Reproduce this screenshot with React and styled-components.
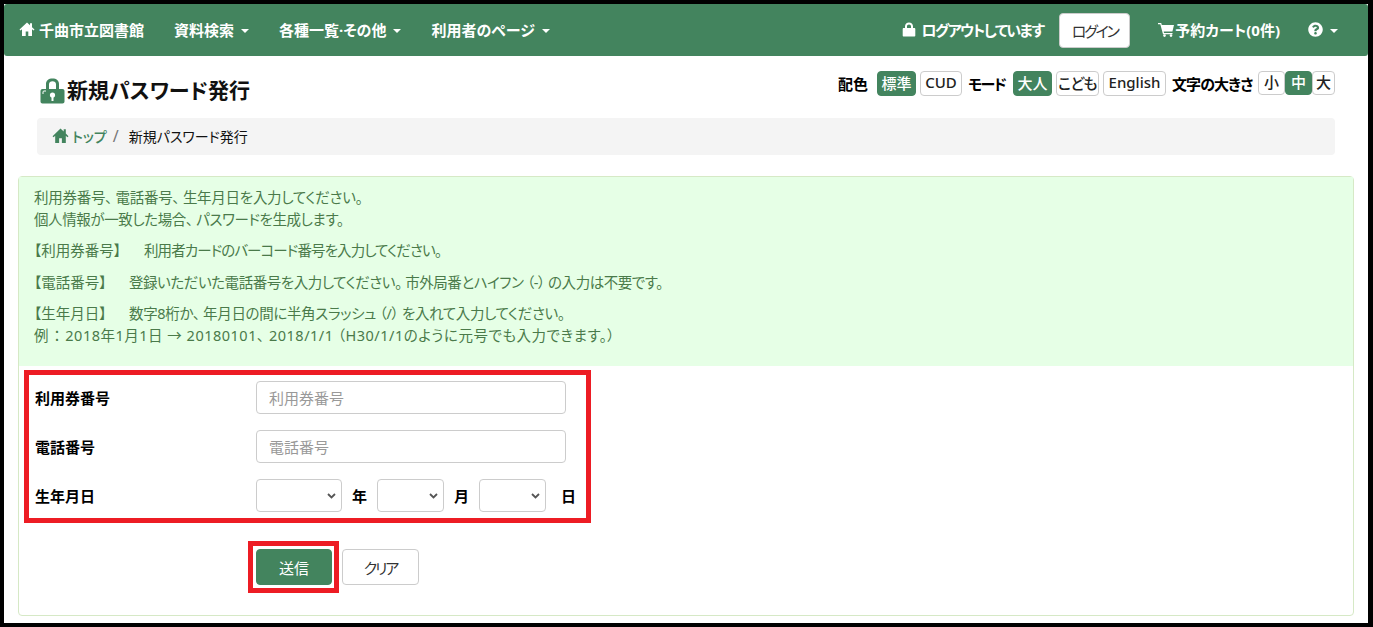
import React from "react";
import styled, { createGlobalStyle } from "styled-components";
import { FaQuestionCircle } from "react-icons/fa";

const Global = createGlobalStyle`
  html, body { margin: 0; padding: 0; background: #000; }
  body {
    font-family: "Noto Sans", "Noto Sans CJK JP", sans-serif;
    font-feature-settings: "palt";
    font-size: 15px;
    color: #111;
  }
`;
const green = "#43845e";
const chevron = "data:image/svg+xml,%3Csvg xmlns='http://www.w3.org/2000/svg' width='9' height='6' viewBox='0 0 9 6'%3E%3Cpath d='M1 1l3.500 3.500L8 1' fill='none' stroke='%23555' stroke-width='1.800'/%3E%3C/svg%3E";

const Frame = styled.div`
  width: 1373px; height: 627px; box-sizing: border-box; padding: 4px 5px 4px 4px; overflow: hidden;
`;
const Page = styled.div`
  background: #fff; height: 619px; display: flex; flex-direction: column;
`;
const Navbar = styled.nav`
  background: ${green}; height: 52px; box-sizing: border-box; flex: none; display: flex; align-items: center;
  padding: 0 30px 2px 15px; border-radius: 3px; color: #fff; font-weight: 700; font-size: 15px;
`;
const NavGroup = styled.div`
  display: flex; align-items: center; margin-left: auto;
`;
const Brand = styled.span`
  display: flex; align-items: center; gap: 4px; margin-right: 30px; white-space: nowrap;
`;
const NavItem = styled.span`
  display: flex; align-items: center; margin-right: 30px; white-space: nowrap;
`;
const NavText = styled.span`
  margin-left: ${p => p.$l || 0}px; letter-spacing: ${p => p.$ls || 0}px; white-space: nowrap;
`;
const Caret = styled.i`
  display: inline-block; width: 0; height: 0; margin-left: 7px; margin-top: 3px;
  border-top: 4px solid #fff; border-left: 4px solid transparent; border-right: 4px solid transparent;
`;
const HelpIcon = styled(FaQuestionCircle)`
  margin-left: 28px;
`;
const LoginButton = styled.button`
  width: 71px; height: 35px; background: #fff; border: 1px solid #ccc; border-radius: 4px; font: inherit;
  font-weight: 400; font-size: 15px; letter-spacing: -2.2px; color: #333; margin: 2px 28px 0 16px; padding: 0;
`;
const Header = styled.div`
  display: flex; justify-content: space-between; padding: 15px 33px 0 36px; height: 47px; flex: none;
`;
const Title = styled.h1`
  margin: 0; display: flex; align-items: flex-start; gap: 2px; padding-top: 4px;
  font-size: 21px; line-height: 30px; font-weight: 700; color: #111;
`;
const TitleIcon = styled.svg`
  margin-top: 3px;
`;
const Modes = styled.div`
  display: flex; align-items: flex-start; height: 25px;
`;
const ModeLabel = styled.span`
  font-weight: 700; font-size: 15px; line-height: 26px; width: ${p => p.$w}px; margin-right: ${p => p.$r}px;
  letter-spacing: ${p => p.$ls || 0}px; white-space: nowrap; color: #000;
`;
const ModeButton = styled.span`
  box-sizing: border-box; height: ${p => p.$h || 25}px; width: ${p => p.$w}px; margin-right: ${p => p.$r ?? 4}px;
  display: flex; align-items: center; justify-content: center; font-size: 15px; font-weight: 500; padding-bottom: 3px;
  white-space: nowrap; letter-spacing: ${p => p.$ls || 0}px;
  border: 1px solid ${p => (p.$on ? green : "#ccc")}; border-radius: 4px;
  background: ${p => (p.$on ? green : "#fff")}; color: ${p => (p.$on ? "#fff" : "#222")};
`;
const Crumb = styled.div`
  margin: 0 33px; height: 37px; flex: none; background: #f4f4f4; border-radius: 4px; box-sizing: border-box;
  display: flex; align-items: center; padding: 0 0 2px 15px; font-size: 14px;
`;
const CrumbLink = styled.span`
  display: flex; align-items: center; gap: 3px; color: ${green}; font-weight: 500;
`;
const CrumbSep = styled.span`
  color: #777; font-size: 16px; margin: 0 10px 0 6px;
`;
const Panel = styled.section`
  margin: 21px 14px 0; height: 440px; box-sizing: border-box; border: 1px solid #d6e9c6; border-radius: 4px; flex: none;
`;
const Notice = styled.div`
  background: #e6ffe6; height: 189px; box-sizing: border-box; padding: 9px 15px 0; color: #4a7a4a; font-size: 14.5px; line-height: 22px;
`;
const Para = styled.p`
  margin: 0 0 ${p => p.$b ?? 9.3}px;
`;
const Line = styled.span`
  display: block; letter-spacing: ${p => p.$ls || 0}px; white-space: pre;
`;
const Tag = styled.span`
  display: inline-block; width: ${p => p.$w}px; letter-spacing: 0;
`;
const RedForm = styled.div`
  box-sizing: border-box; width: 567px; height: 153px; margin: 4px 0 0 5px; border: 5px solid #ed1c24; padding: 6px 0 0 6px;
  display: flex; flex-direction: column; gap: 16px;
`;
const Row = styled.div`
  display: flex; align-items: center; height: 33px;
`;
const Label = styled.label`
  width: 221px; flex: none; font-weight: 700; font-size: 15px; color: #000;
`;
const TextInput = styled.input`
  width: 310px; height: 33px; box-sizing: border-box; border: 1px solid #ccc; border-radius: 4px; padding: 0 12px;
  font: inherit; font-size: 15px; &::placeholder { color: #999; }
`;
const Select = styled.select`
  flex: none; appearance: none; width: ${p => p.$w}px; height: 33px; box-sizing: border-box; border: 1px solid #ccc; border-radius: 4px;
  background: #fff url("${chevron}") no-repeat right 5px center;
`;
const Unit = styled.span`
  font-weight: 700; font-size: 15px; color: #000; width: ${p => p.$w}px; text-align: ${p => p.$a || "center"}; flex: none;
`;
const Actions = styled.div`
  display: flex; align-items: flex-start; margin: 18px 0 0 229px; gap: 3px;
`;
const RedWrap = styled.div`
  border: 5px solid #ed1c24; padding: 3px 2px 3px 3px; display: flex;
`;
const Btn = styled.button`
  width: ${p => p.$w}px; height: 36px; box-sizing: border-box; border-radius: 4px; font: inherit; font-size: 15px; padding: 0;
  letter-spacing: ${p => p.$ls || 0}px;
  border: 1px solid ${p => (p.$primary ? green : "#ccc")};
  background: ${p => (p.$primary ? green : "#fff")}; color: ${p => (p.$primary ? "#fff" : "#333")};
  margin-top: ${p => p.$top || 0}px;
`;

const Home = ({ s = 16, c = "#fff" }) => (
  <svg width={s} height={s} viewBox="0 0 16 16" fill={c}><path d="M8 1.500 0.500 8.600l1 1L3 8.200V15h3.700v-4.500h2.600V15H13V8.200l1.500 1.400 1-1-2.500-2.400V2.200h-2v2.100z" /></svg>
);
const Lock = () => (
  <svg width="14" height="15" viewBox="0 0 14 15" fill="#fff"><path d="M3 6V4.300C3 2 4.800.5 7 .5s4 1.500 4 3.800V6h1.200c.7 0 1.100.5 1.100 1.100v6.300c0 .7-.4 1.100-1.100 1.100H1.800c-.7 0-1.100-.4-1.100-1.100V7.100C.7 6.500 1.100 6 1.800 6zM5 6h4V4.300C9 3.200 8.100 2.500 7 2.500s-2 .7-2 1.800z" /></svg>
);
const Cart = () => (
  <svg width="17" height="15" viewBox="0 0 17 15" fill="#fff"><path d="M0 1h3.200l.6 2H16l-1.600 6.500H5.700l.3 1.500h8.500v1.200H5L2.300 2.300H0z" /><circle cx="6.500" cy="13.600" r="1.300" /><circle cx="13" cy="13.600" r="1.300" /></svg>
);
const BigLock = () => (
  <TitleIcon width="25" height="26" viewBox="0 0 25 26"><path fill={green} fillRule="evenodd" d="M6 11V6c0-3.500 2.600-5.500 6.500-5.500S19 2.500 19 6v5h3.500c1.200 0 2 .8 2 2v10.500c0 1.200-.8 2-2 2h-20c-1.200 0-2-.8-2-2V13c0-1.200.8-2 2-2zm3 0h7V6.300C16 4.300 14.500 3.300 12.500 3.300S9 4.300 9 6.300z" /><circle cx="12.500" cy="17" r="2.600" fill="#fff" /><rect x="11.500" y="18" width="2" height="5" fill="#fff" /><path d="M3 16v-2c0-.6.400-1 1-1h2" stroke="#fff" strokeWidth="1" fill="none" /></TitleIcon>
);

export default function App() {
  return (
    <Frame>
      <Global />
      <Page>
        <Navbar>
          <Brand><Home />千曲市立図書館</Brand>
          <NavItem>資料検索<Caret /></NavItem>
          <NavItem>各種一覧·その他<Caret /></NavItem>
          <NavItem>利用者のページ<Caret /></NavItem>
          <NavGroup>
            <Lock />
            <NavText $l={5} $ls={-1.6}>ログアウトしています</NavText>
            <LoginButton>ログイン</LoginButton>
            <Cart />
            <NavText>予約カート(0件)</NavText>
            <HelpIcon size={15} />
            <Caret />
          </NavGroup>
        </Navbar>
        <Header>
          <Title><BigLock />新規パスワード発行</Title>
          <Modes>
            <ModeLabel $w={30} $r={9}>配色</ModeLabel>
            <ModeButton $w={39} $on>標準</ModeButton>
            <ModeButton $w={42} $r={6}>CUD</ModeButton>
            <ModeLabel $w={36} $r={9} $ls={-1.5}>モード</ModeLabel>
            <ModeButton $w={39} $on>大人</ModeButton>
            <ModeButton $w={43} $ls={-0.8}>こども</ModeButton>
            <ModeButton $w={63} $r={6}>English</ModeButton>
            <ModeLabel $w={81} $r={5} $ls={-0.9}>文字の大きさ</ModeLabel>
            <ModeButton $w={27} $h={24} $r={0}>小</ModeButton>
            <ModeButton $w={27} $h={24} $r={0} $on>中</ModeButton>
            <ModeButton $w={23} $h={24} $r={0}>大</ModeButton>
          </Modes>
        </Header>
        <Crumb>
          <CrumbLink><Home s={17} c={green} />トップ</CrumbLink>
          <CrumbSep>/</CrumbSep>
          <span>新規パスワード発行</span>
        </Crumb>
        <Panel>
          <Notice>
            <Para>
              <Line $ls={-0.28}>利用券番号、 電話番号、 生年月日を入力してください。</Line>
              <Line $ls={-0.4}>個人情報が一致した場合、 パスワードを生成します。</Line>
            </Para>
            <Para><Line $ls={-0.9}><Tag $w={110}>【利用券番号】</Tag>利用者カードのバーコード番号を入力してください。</Line></Para>
            <Para><Line $ls={-0.45}><Tag $w={95}>【電話番号】</Tag>登録いただいた電話番号を入力してください。 市外局番とハイフン （-） の入力は不要です。</Line></Para>
            <Para $b={0}>
              <Line $ls={-0.35}><Tag $w={95}>【生年月日】</Tag>数字8桁か、 年月日の間に半角スラッシュ （/） を入れて入力してください。</Line>
              <Line $ls={0.5}>例 ： 2018年1月1日 → 20180101、 2018/1/1 （H30/1/1のように元号でも入力できます。）</Line>
            </Para>
          </Notice>
          <RedForm>
            <Row><Label>利用券番号</Label><TextInput placeholder="利用券番号" /></Row>
            <Row><Label>電話番号</Label><TextInput placeholder="電話番号" /></Row>
            <Row>
              <Label>生年月日</Label>
              <Select $w={86}><option></option></Select>
              <Unit $w={35}>年</Unit>
              <Select $w={67}><option></option></Select>
              <Unit $w={35}>月</Unit>
              <Select $w={67}><option></option></Select>
              <Unit $w={30} $a="right">日</Unit>
            </Row>
          </RedForm>
          <Actions>
            <RedWrap><Btn $w={76} $primary>送信</Btn></RedWrap>
            <Btn $w={77} $top={8} $ls={-2}>クリア</Btn>
          </Actions>
        </Panel>
      </Page>
    </Frame>
  );
}
